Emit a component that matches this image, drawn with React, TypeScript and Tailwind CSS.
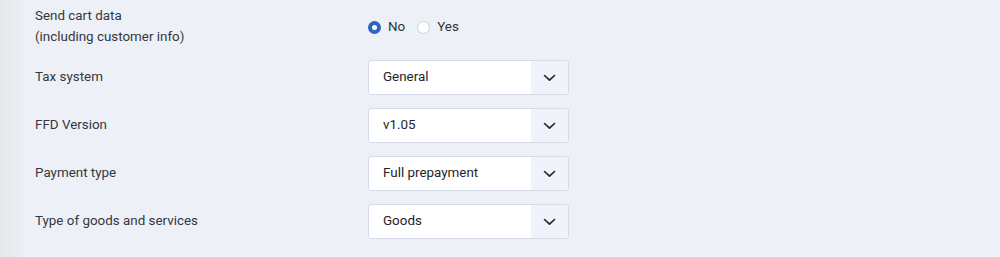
import { useState } from "react";

const selects = [
  { label: "Tax system", value: "General" },
  { label: "FFD Version", value: "v1.05" },
  { label: "Payment type", value: "Full prepayment" },
  { label: "Type of goods and services", value: "Goods" },
];

function Chevron() {
  return (
    <svg width="13" height="8" viewBox="0 0 13 8" fill="none">
      <path d="M1.5 1.5L6.5 6.2L11.5 1.5" stroke="#1f2329" strokeWidth="1.6" strokeLinecap="round" strokeLinejoin="round" />
    </svg>
  );
}

function Radio({ checked, label, onClick }: { checked: boolean; label: string; onClick: () => void }) {
  return (
    <button type="button" onClick={onClick} className="flex items-center gap-[7px]">
      {checked ? (
        <span className="w-[13px] h-[13px] rounded-full border-[4px] border-[#2a66c4] bg-white" />
      ) : (
        <span className="w-[13px] h-[13px] rounded-full border border-[#c9ced8] bg-white" />
      )}
      <span className="text-[13.4px] text-[#2d3036]">{label}</span>
    </button>
  );
}

export default function App() {
  const [send, setSend] = useState("No");

  return (
    <div className="w-[1000px] h-[257px] flex bg-[#edf0f7] font-['Roboto','Liberation_Sans',sans-serif]">
      {/* left shade */}
      <div className="w-[28px] bg-gradient-to-r from-[#e6e8ec] to-[#edf0f7]" />

      <div className="flex flex-col gap-[13px] pl-[7px] pt-[5px]">
        <div className="flex items-center">
          <div className="w-[333px] text-[13.4px] leading-[21px] text-[#34373d]">
            <div>Send cart data</div>
            <div>(including customer info)</div>
          </div>
          <div className="flex items-center gap-[12px] pt-[3px]">
            <Radio checked={send === "No"} label="No" onClick={() => setSend("No")} />
            <Radio checked={send === "Yes"} label="Yes" onClick={() => setSend("Yes")} />
          </div>
        </div>

        {selects.map((s) => (
          <div key={s.label} className="flex items-center h-[35px]">
            <div className="w-[333px] text-[13.4px] text-[#34373d]">{s.label}</div>
            <div className="w-[201px] h-[35px] flex rounded-[3px] border border-[#d3dbe8] bg-white overflow-hidden">
              <div className="flex-1 flex items-center pl-[14px] text-[13.4px] text-[#1f2329]">{s.value}</div>
              <div className="w-[37px] flex items-center justify-center bg-[#f0f3f9]">
                <Chevron />
              </div>
            </div>
          </div>
        ))}
      </div>
    </div>
  );
}
